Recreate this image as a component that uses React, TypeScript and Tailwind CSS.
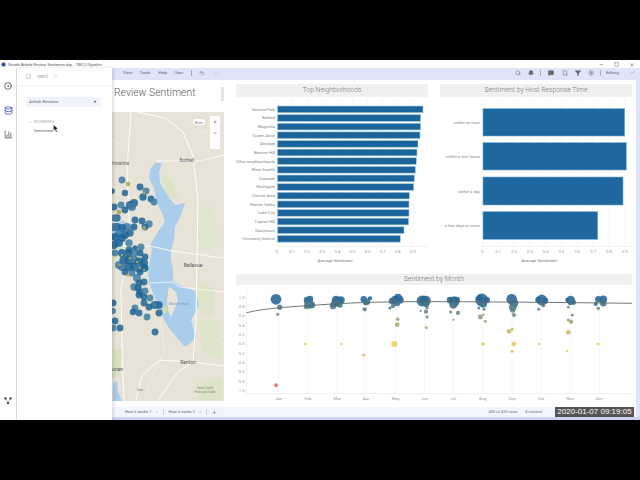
import React from "react";
import { Search, X, ChevronDown, Undo2, Redo2, Filter, Settings, MessageSquare, Bookmark, Bell, Minus, Square, Plus, CircleDot, Database, BarChart3 } from "lucide-react";

const hood: [string, number][] = [
  ["Seward Park", 423], ["Ballard", 420.7], ["Magnolia", 420.7], ["Queen Anne", 420], ["Delridge", 418], ["Beacon Hill", 417],
  ["Other neighborhoods", 416.3], ["West Seattle", 415.3], ["Cascade", 414.3], ["Northgate", 413.7], ["Central Area", 409.3],
  ["Rainier Valley", 409], ["Lake City", 409], ["Capitol Hill", 408.7], ["Downtown", 404], ["University District", 400.3],
];
const ticks = ["0", "0.1", "0.2", "0.3", "0.4", "0.5", "0.6", "0.7", "0.8", "0.9"];

function TopChart() {
  return (
    <svg viewBox="236 97 192 170" className="w-[192px] h-[170px] block">
      {ticks.map((t, i) => {
        const x = 277 + i * 15.1;
        return (
          <g key={t}>
            <line x1={x} x2={x} y1={100} y2={246} stroke="#eef0f2" strokeWidth={0.6} />
            <text x={x} y={253} textAnchor="middle" fontSize={4.2} fill="#999">{t}</text>
          </g>
        );
      })}
      <line x1={277} x2={428} y1={246.5} y2={246.5} stroke="#e8e8e8" strokeWidth={0.6} />
      {hood.map(([n, e], i) => {
        const y = 106 + i * 8.63;
        return (
          <g key={n}>
            <rect x={277.5} y={y} width={e - 277.5} height={6.7} fill="#1c659c" stroke="#a5cbe4" strokeWidth={0.6} />
            <text x={275} y={y + 4.8} textAnchor="end" fontSize={4.2} fill="#888">{n}</text>
          </g>
        );
      })}
      <text x={335} y={262} textAnchor="middle" fontSize={4.2} fill="#777">Average Sentiment</text>
    </svg>
  );
}

const resp: [string, number, number, number][] = [
  ["within an hour", 108.7, 136, 624.7],
  ["within a few hours", 142.7, 170, 626.3],
  ["within a day", 177, 205, 623],
  ["a few days or more", 211.7, 239.3, 597.7],
];

function HostChart() {
  return (
    <svg viewBox="440 97 192 170" className="w-[192px] h-[170px] block">
      {ticks.map((t, i) => {
        const x = 482.5 + i * 15.8;
        return (
          <g key={t}>
            <line x1={x} x2={x} y1={100} y2={246} stroke="#eef0f2" strokeWidth={0.6} />
            <text x={x} y={253} textAnchor="middle" fontSize={4.2} fill="#999">{t}</text>
          </g>
        );
      })}
      <line x1={482} x2={632} y1={246.5} y2={246.5} stroke="#e8e8e8" strokeWidth={0.6} />
      {resp.map(([n, a, b, e]) => (
        <g key={n}>
          <rect x={483} y={a} width={e - 483} height={b - a} fill="#1e689f" stroke="#74acd0" strokeWidth={0.6} />
          <text x={480} y={(a + b) / 2 + 1.5} textAnchor="end" fontSize={4.2} fill="#888">{n}</text>
        </g>
      ))}
      <text x={539} y={262} textAnchor="middle" fontSize={4.2} fill="#777">Average Sentiment</text>
    </svg>
  );
}

const months: [string, number][] = [
  ["Jan", 278.7], ["Feb", 308], ["Mar", 337.3], ["Apr", 366], ["May", 395.7], ["Jun", 424.7],
  ["Jul", 453.3], ["Aug", 482.7], ["Sep", 512], ["Oct", 541], ["Nov", 570.3], ["Dec", 599.3],
];
const yvals = ["1.0", "0.8", "0.6", "0.4", "0.2", "0.0", "-0.2", "-0.4", "-0.6", "-0.8", "-1.0"];
const dots: [number, number, number][] = [
  [276,299.3,5],[279.7,307.3,2.5],[277.7,314.3,1.5],[276,385.3,1.8],
  [307,300,3],[310,299,3],[309,304,4.5],[306,307,2],[312,305,3],[305.3,344,1.2],
  [336,300,4],[341,300,3.5],[334,304,3],[338,301,4],[333,306,3],[340,305,2.5],[337,303,3.5],[341.3,344,1.2],
  [363.7,299.3,3],[367,301.7,3],[370,298.3,2],[365.3,303.3,2],[364.7,309.3,2],[363.7,355,1.5],
  [395,300,4],[398,298,4],[392,301,3],[400,300,3.5],[397,303,3],[393,306,2],[390,308,1.5],[397.7,319.3,1.6],[397.3,324.7,2.2],[394.3,344,2.8],
  [422,301,5],[426,300.7,4.5],[424,300,4],[427,307.7,1.5],[426,304,3],[426,311.7,2],[420.7,311,1],[427,317,1.6],[426.3,327.7,1.5],
  [454,301.7,5],[450,300,3],[456.7,300,3],[453.3,305,3.5],[450.7,312,1.5],[458,313,2],[453.3,319.7,1],
  [481.7,300,6],[486.7,300,3],[480,298.5,3],[483.3,304,3.5],[478.7,308,1.4],[484,309.3,1.4],[483.3,314.7,1],[480.3,317,2.2],[485.3,321.3,1.4],[483,344,1.6],
  [511.7,299.3,5],[514,303.3,4],[512.7,307.3,3.5],[512.7,310,2.5],[514,315,2],[509,331.3,2.2],[512.3,329.3,1.4],[513.7,344,2.2],[512,351.3,1.5],
  [541.7,300,5],[545,300.7,3],[538.5,300,3],[543.3,305,2],[538.7,309.3,1.4],[539.3,344,1.2],
  [570.7,300,4],[567.3,300,2],[573.3,302.3,2.5],[570,303.3,2],[568.3,307.3,1.2],[572.3,315,1.4],[568.3,320,1.4],[571,321.7,2],[568.3,332.3,2.2],[567,351,1],
  [603.3,299.3,3.5],[598.3,299.3,3],[603.3,303.3,3],[595.7,304,2],[598.3,308.3,1.5],[598,344,1.5],
];

function mix(a: number[], b: number[], t: number) {
  return `rgb(${a.map((v, i) => Math.round(v + (b[i] - v) * t)).join(",")})`;
}
function colorOf(y: number) {
  const v = 1 - (y - 297.3) / 46.5;
  const blue = [27, 96, 152], yel = [236, 207, 91], red = [217, 96, 95];
  if (v >= 0) return mix(yel, blue, Math.pow(Math.min(v, 1), 1.3));
  return mix(yel, red, Math.min(-v, 1));
}

function Scatter() {
  return (
    <svg viewBox="236 285 396 118" className="w-[396px] h-[118px] block">
      {months.map(([m, x]) => (
        <g key={m}>
          <line x1={x} x2={x} y1={292} y2={393} stroke="#eceef0" strokeWidth={0.6} />
          <text x={x} y={399.5} textAnchor="middle" fontSize={4.2} fill="#999">{m}</text>
        </g>
      ))}
      {yvals.map((v, i) => (
        <text key={v} x={244.5} y={298.8 + i * 9.3} textAnchor="end" fontSize={4.2} fill="#999">{v}</text>
      ))}
      <line x1={246.7} x2={246.7} y1={290} y2={393.5} stroke="#e6e6e6" strokeWidth={0.6} />
      <line x1={246.7} x2={632} y1={393.5} y2={393.5} stroke="#e6e6e6" strokeWidth={0.6} />
      {dots.map(([x, y, r], i) => (
        <circle key={i} cx={x} cy={y} r={r * 1.08} fill={colorOf(y)} fillOpacity={0.88} />
      ))}
      <path d="M246.7 312.7 C262 309 278 307.5 308 305.7 C335 303.5 365 302.2 395 301.8 C430 301.3 520 302 632 303.3" fill="none" stroke="#5f6468" strokeWidth={0.9} />
    </svg>
  );
}

const pins: [number, number, number][] = [
  [122,180,3],[125,193,2.8],[140,187,3],[146,191,3],[143,197,3.2],[151,199,3],[154,202,3],[112,191,2.5],[114,207,3],[121,205,3],
  [130,205,3.5],[134,203,3.5],[132,207,3.5],[125,210,3],[117,218,3.2],[114,218,3],[135,220,3],[142,221,3],[149,224,3.2],[145,227,3],
  [134,227,3],[127,227,3.5],[122,228,3.5],[117,227,3.5],[114,227,3.5],[130,233,3.2],[125,235,3.5],[119,233,3.5],[115,237,3.5],[122,238,3.5],
  [129,243,3.2],[119,243,3.5],[114,245,3.5],[141,247,3],[135,248,2.5],[129,250,3],
  [115,253,3],[122,253,3.5],[129,253,3.5],[135,253,3],[140,253,3],[145,257,3],[119,265,3.5],[124,260,4],[129,260,4],[134,260,4],[139,262,4],[144,263,3.5],
  [122,267,3.5],[129,267,4],[134,267,4],[139,268,4],[144,268,3.5],[125,272,3],[132,273,3],[140,272,3],[145,268,3],
  [137,278,3.5],[139,283,3],[144,282,3],[134,287,3.2],[138,288,3.2],[140,292,3],[145,291,3],[139,295,3],[144,297,3],[150,298,3],
  [155,305,3.5],[159,305,3.2],[154,305,3],[149,307,3],[144,303,3],[135,308,3],[133,312,2.8],[139,313,3],[147,317,3],[159,313,3],
  [113,303,3],[113,311,2.6],[115,321,3],[120,328,3],[113,328,3],[155,332,3],
];
const olive: [number, number, number][] = [
  [128,184,2.2],[144,193,1.6],[119,212,2.5],[144,228,2],
  [120,265,1.3],[130,258,1.3],[137,262,1.3],[140,268,1.3],[127,275,1.3],[129,275,1.2],[122,255,1.2],[144,270,1.2],
];

function MapArt() {
  return (
    <svg viewBox="112 112 112 289" className="w-[112px] h-[289px] block" preserveAspectRatio="none">
      <rect x={112} y={112} width={112} height={289} fill="#e7e3d6" />
      <path d="M112 225 L126 222 L125 240 L130 260 L112 270Z" fill="#dfe4cc" />
      <path d="M161 174 L172 180 L178 200 L166 196Z" fill="#dce4c6" />
      <path d="M196 210 L212 205 L218 245 L200 250Z" fill="#e0e5cd" />
      <path d="M198 320 L220 320 L222 360 L203 352Z" fill="#dfe5cb" />
      <path d="M198 280 L215 290 L212 318 L196 308Z" fill="#dde4c8" />
      <path d="M112 350 L122 348 L120 375 L112 378Z" fill="#d8e0bf" />
      <path d="M200 382 L222 378 L222 400 L198 400Z" fill="#dce3c6" />
      <path d="M112 225 L124 220 L128 232 L120 244 L112 240Z" fill="#a9cdea" />
      <path d="M113 401 L113 383 L117 381 L118 392 L122 401Z" fill="#a9cdea" />
      <path d="M155 163 L162 163 L159 172 L160 183 L167 195 L175 205 L185 203 L180 217 L175 227 L174 240 L171 250 L171 260 L173 270 L173 281 L181 286 L195 291 L199 305 L191 320 L196 337 L187 346 L184 346 L169 328 L161 314 L154 295 L149 283 L148 270 L152 250 L150 245 L159 230 L165 222 L162 213 L157 203 L154 188 L149 178 L150 170Z" fill="#a9cdea" />
      <path d="M169 287 L176 292 L178 300 L174 310 L171 317 L168 311 L167 300 L168 292Z" fill="#e7e3d6" />
      <ellipse cx={165} cy={310} rx={2} ry={4} fill="#d5dfa8" />
      <path d="M131 112 L127 170 L130 240 L121 290 L122 350 L124 400" fill="none" stroke="#fff" strokeWidth={0.9} />
      <path d="M137 112 L165 118 L183 132 L193 156 L198 200 L197 260 L196 320 L193 362 L178 372 L158 400" fill="none" stroke="#fff" strokeWidth={1} />
      <path d="M157 161 L200 161 L224 155" fill="none" stroke="#fff" strokeWidth={0.8} />
      <path d="M112 245 L150 246 L172 251 L224 258" fill="none" stroke="#fff" strokeWidth={0.8} />
      <path d="M150 283 L172 282 L180 287 L224 292" fill="none" stroke="#fff" strokeWidth={0.7} />
      <path d="M136 400 L142 375 L160 360 L190 362 L224 366" fill="none" stroke="#fff" strokeWidth={0.9} />
      <path d="M160 320 L165 350 L146 390" fill="none" stroke="#f4f2ea" strokeWidth={0.7} />
      <path d="M112 140 L135 150 M200 130 L224 140 M205 180 L224 195 M205 330 L224 345" fill="none" stroke="#f4f2ea" strokeWidth={0.6} />
      <rect x={193} y={119} width={12} height={6} rx={3} fill="#fff" />
      <text x={199} y={123.6} textAnchor="middle" fontSize={3.8} fill="#777">Brier</text>
      <text x={112} y={165} fontSize={4.8} fill="#666">horeline</text>
      <text x={187} y={162} textAnchor="middle" fontSize={4.8} fill="#666">Bothell</text>
      <text x={193} y={267} textAnchor="middle" fontSize={5} fill="#555">Bellevue</text>
      <text x={188} y={364} textAnchor="middle" fontSize={5} fill="#555">Renton</text>
      <text x={112} y={371} fontSize={5} fill="#555">urien</text>
      <text x={179} y={305} textAnchor="middle" fontSize={3.4} fill="#7a9cb8">Mercer Island</text>
      <text x={140} y={391} textAnchor="middle" fontSize={3.6} fill="#777">Sea</text>
      <text x={205} y={389} textAnchor="middle" fontSize={3.2} fill="#8a8a7a">Soos Creek</text>
      <text x={205} y={393} textAnchor="middle" fontSize={3.2} fill="#8a8a7a">Park and Trails</text>
      {pins.map(([x, y, r], i) => (
        <circle key={i} cx={x} cy={y} r={r * 1.15} fill={i % 3 === 0 ? "#3f7ba3" : "#1d6496"} fillOpacity={0.85} />
      ))}
      {olive.map(([x, y, r], i) => (
        <circle key={i} cx={x} cy={y} r={r} fill="#a9a85c" fillOpacity={0.9} />
      ))}
    </svg>
  );
}

function Heading({ children, className = "" }: { children: React.ReactNode; className?: string }) {
  return (
    <div className={`bg-[#f0f0f0] text-center text-[#777] text-[6.8px] font-light flex items-center justify-center ${className}`}>
      {children}
    </div>
  );
}

function Cursor() {
  return (
    <svg width="6" height="9" viewBox="0 0 7 10" className="absolute left-[36px] top-[56px]">
      <path d="M0.5 0.5 L0.5 7.5 L2.2 6 L3.5 9 L5 8.4 L3.7 5.6 L6 5.4Z" fill="#222" stroke="#fff" strokeWidth={0.4} />
    </svg>
  );
}

export default function App() {
  return (
    <div className="w-[640px] h-[480px] bg-black flex flex-col overflow-hidden font-['Roboto',sans-serif]">
      <div className="h-[60px] shrink-0" />
      <div className="h-[360px] flex flex-col bg-white">
        {/* title bar */}
        <div className="h-[8px] shrink-0 flex items-center pl-[1px] pr-[5px] pt-[1px] bg-white">
          <div className="w-[5px] h-[5px] rounded-full bg-[#2b3f9e] border border-[#8da0e0] shrink-0" />
          <span className="ml-[2px] text-[3.9px] text-[#555] font-['Liberation_Sans',sans-serif] whitespace-nowrap">
            Seattle Airbnb Review Sentiment.dxp - TIBCO Spotfire
          </span>
          <div className="ml-auto flex items-center gap-[10px] text-[#555]">
            <Minus size={5} />
            <Square size={5} />
            <X size={6} />
          </div>
        </div>
        <div className="flex-1 flex min-h-0">
          {/* rail */}
          <div className="w-[17px] shrink-0 border-r border-[#dcdcdc] bg-white flex flex-col items-center pt-[14px] pb-[15px]">
            <CircleDot size={8} strokeWidth={3} className="text-[#6b6b6b]" />
            <Database size={9} strokeWidth={2} className="text-[#3f4ea8] mt-[16px]" />
            <BarChart3 size={9} strokeWidth={3} className="text-[#8a8a8a] mt-[15px]" />
            <svg width="8" height="8" viewBox="0 0 8 8" className="mt-auto">
              <circle cx="1.5" cy="1.5" r="1.2" fill="#444" /><circle cx="6.5" cy="1.5" r="1.2" fill="#444" /><circle cx="4" cy="6" r="1.2" fill="#444" />
              <path d="M1.5 1.5 L4 6 L6.5 1.5" stroke="#777" strokeWidth="0.5" fill="none" />
            </svg>
          </div>
          {/* panel */}
          <div className="relative z-10 w-[95px] shrink-0 bg-white shadow-[2px_0_3px_rgba(0,0,0,0.12)]">
            <div className="h-[18px] flex items-center pl-[8px] text-[#aaa] border-b border-[#f4f4f4]">
              <Search size={7} />
              <span className="ml-[5px] text-[5.6px] text-[#aaa]">sent</span>
              <X size={7} strokeWidth={1.2} className="ml-[4px]" />
            </div>
            <div className="ml-[9px] mr-[11px] mt-[11px] h-[10px] bg-[#f1f3fb] flex items-center justify-between pl-[3px] pr-[5px]">
              <span className="text-[4.3px] text-[#666]">Airbnb Reviews</span>
              <span className="w-0 h-0 border-l-[1.5px] border-r-[1.5px] border-t-[2px] border-l-transparent border-r-transparent border-t-[#333]" />
            </div>
            <div className="ml-[10px] mt-[12px] flex items-center h-[6px] text-[#aaa]">
              <ChevronDown size={5} />
              <span className="ml-[2px] text-[4.1px] tracking-[0.3px] text-[#aaa]">NUMBERS</span>
            </div>
            <div className="ml-[17px] mt-[3px] text-[4.3px] text-[#555]">Sentiment</div>
            <Cursor />
          </div>
          {/* app */}
          <div className="flex-1 min-w-0 flex flex-col bg-[#dfe5f8]">
            <div className="h-[12px] shrink-0 flex items-center text-[#666] text-[4.4px] pl-[11px] pr-[5px] pb-[2px]">
              <span>View</span>
              <span className="ml-[7px]">Tools</span>
              <span className="ml-[8px]">Help</span>
              <span className="ml-[7px]">User</span>
              <span className="ml-[8px] w-px h-[6px] bg-[#9aa]" />
              <Undo2 size={6} className="ml-[7px] text-[#777]" />
              <Redo2 size={6} className="ml-[8px] text-[#c4cad8]" />
              <div className="ml-auto flex items-center text-[#666]">
                <Search size={6} />
                <Bell size={6} fill="currentColor" className="ml-[7px]" />
                <span className="ml-[6px] w-px h-[6px] bg-[#aab]" />
                <MessageSquare size={6} fill="currentColor" className="ml-[7px]" />
                <Bookmark size={6} className="ml-[8px]" />
                <Filter size={6} fill="currentColor" className="ml-[7px]" />
                <Settings size={6} className="ml-[7px]" />
                <span className="ml-[6px] w-px h-[6px] bg-[#aab]" />
                <span className="ml-[5px] text-[4.2px] w-[24px]">Editing</span>
                <ChevronDown size={5} />
              </div>
            </div>
            <div className="flex-1 min-h-0 flex mr-[4px] bg-white">
              {/* left: title and map */}
              <div className="w-[112px] shrink-0 flex flex-col">
                <div className="h-[32px] pl-[2px] pt-[7px] relative">
                  <span className="block text-[10.4px] leading-[12px] font-light text-[#5c5c5c] whitespace-nowrap">Review Sentiment</span>
                  <div className="absolute right-[0px] top-[7px] w-[3px] h-[14px] bg-[#e4e4e4]" />
                </div>
                <div className="relative">
                  <MapArt />
                  <div className="absolute left-[98px] top-[4px] w-[10px] h-[33px] bg-white flex flex-col items-center justify-around text-[#555]">
                    <Plus size={4} strokeWidth={3} />
                    <Minus size={4} strokeWidth={3} />
                    <Minus size={3} className="text-[#ccc]" />
                  </div>
                </div>
              </div>
              {/* right: charts */}
              <div className="ml-[12px] flex flex-col pt-[4px]">
                <div className="flex gap-[12px]">
                  <div>
                    <Heading className="h-[13px]">Top Neighborhoods</Heading>
                    <TopChart />
                  </div>
                  <div>
                    <Heading className="h-[13px]">Sentiment by Host Response Time</Heading>
                    <HostChart />
                  </div>
                </div>
                <Heading className="h-[11px] mt-[7px]">Sentiment by Month</Heading>
                <Scatter />
              </div>
            </div>
            {/* tabs */}
            <div className="relative h-[10px] shrink-0 mr-[4px] bg-[#f3f5fc] flex items-center text-[4px] text-[#666] pl-[13px] pr-[94px]">
              <span>How it works 1</span>
              <span className="ml-[4px] text-[#bbb]">×</span>
              <span className="ml-[5px] w-px h-[6px] bg-[#ccd]" />
              <span className="ml-[5px]">How it works 2</span>
              <span className="ml-[4px] text-[#bbb]">×</span>
              <span className="ml-[5px] w-px h-[6px] bg-[#ccd]" />
              <Plus size={5} className="ml-[5px]" />
              <span className="ml-auto text-[#777] whitespace-nowrap">435 of 435 rows</span>
              <span className="ml-[8px] text-[#777] whitespace-nowrap">8 marked</span>
              <div className="absolute right-[2px] top-0 w-[79px] h-[10px] bg-[#555555] text-white text-[8px] font-['Liberation_Sans',sans-serif] flex items-center justify-center whitespace-nowrap">
                2020-01-07 09:19:05
              </div>
            </div>
            <div className="h-[3px] shrink-0 bg-[#ccd3f0]" />
          </div>
        </div>
      </div>
      <div className="flex-1" />
    </div>
  );
}
